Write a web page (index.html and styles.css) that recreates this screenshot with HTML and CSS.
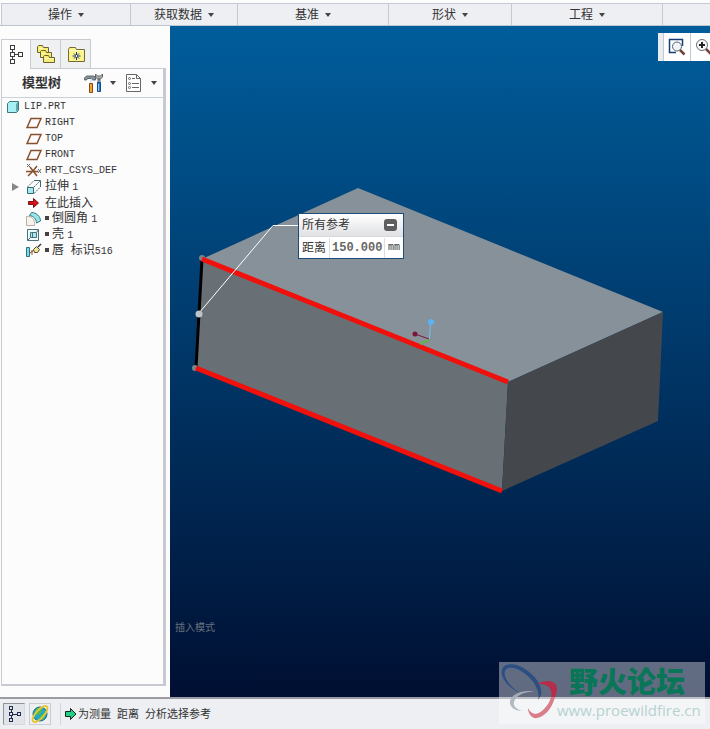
FILE: index.html
```html
<!DOCTYPE html>
<html lang="zh-CN">
<head>
<meta charset="utf-8">
<title>LIP.PRT</title>
<link rel="stylesheet" href="styles.css">
</head>
<body>
<nav class="ribbon" aria-label="功能区">
  <button class="group">操作<i class="caret"></i></button>
  <button class="group">获取数据<i class="caret"></i></button>
  <button class="group">基准<i class="caret"></i></button>
  <button class="group">形状<i class="caret"></i></button>
  <button class="group">工程<i class="caret"></i></button>
  <div class="group"></div>
</nav>
<main class="workspace">
  <aside class="sidebar">
    <div class="tabs">
      <button class="tab active" aria-label="模型树">
        <svg width="18" height="22" viewBox="0 0 18 22" fill="none" stroke="#3c3c3c" shape-rendering="crispEdges"><path d="M3.500 1.500h4v4h-4zM3.500 8.500h4v4h-4zM3.500 15.500h4v4h-4zM11.500 8.500h4v4h-4zM5.500 6v2M5.500 13v2M8 10.500h3"/></svg>
      </button>
      <button class="tab" aria-label="文件夹浏览器">
        <svg width="20" height="20" viewBox="0 0 20 20" stroke="#6f6230"><path fill="#f7ee77" d="M1.500 8.500v-6l1-1h4l1 2h5v5z"/><path fill="#f7ee77" d="M4.500 13.500v-6l1-1h4l1 2h5v5z"/><path fill="#f7ee77" d="M7.500 18.500v-6l1-1h4l1 2h5v5z"/><path stroke="#fffcc0" d="M9 14.500h8M6 9.500h3M3 4.500h4"/></svg>
      </button>
      <button class="tab" aria-label="收藏夹">
        <svg width="20" height="18" viewBox="0 0 20 18"><path fill="#fbf58b" stroke="#756832" d="M2.500 16.500v-12l1-2h6l1 2h8v12z"/><path stroke="#fffcc8" d="M3 5.500h15"/><path stroke="#17306f" d="M10.500 7v8M6.500 11h8M8 8.500l5 5M13 8.500l-5 5"/><path fill="#fff" d="M10 10h1v2h-1z"/></svg>
      </button>
    </div>
    <section class="panel">
      <header class="panel-head">
        <h1>模型树</h1>
        <button class="tool" aria-label="设置">
          <svg width="20" height="22" viewBox="0 0 20 22"><path fill="#879199" stroke="#5c666c" d="M.5 8V6l2-2h7l2 1v3h-3L7 6.500H4L2 8z"/><path stroke="#d9eef5" stroke-width="2" d="M7 7v4"/><path fill="#f4a236" stroke="#8a4a1a" d="M5.500 11.500h3v9h-3z"/><path fill="#a9b0b6" stroke="#666" d="M11.500 2v3l2 2h3l2-2V2l-2 2h-3zM14 7v4h2V7z"/><path fill="#287bd0" stroke="#174987" d="M13.500 10.500h3v9h-3z"/><path stroke="#8dccff" d="M14.500 12v7"/></svg><i class="caret"></i>
        </button>
        <button class="tool" aria-label="显示">
          <svg width="18" height="20" viewBox="0 0 18 20" fill="none" stroke="#666"><path fill="#fff" d="M1.500 1.500h10l4 4v13h-14z"/><path d="M11.500 1.500v4h4M7 5.500h3M7 10.500h7M7 14.500h7"/><circle cx="4.500" cy="5.500" r="1"/><circle cx="4.500" cy="10.500" r="1"/><circle cx="4.500" cy="14.500" r="1"/></svg><i class="caret"></i>
        </button>
      </header>
      <ul class="tree">
        <li class="root"><svg width="14" height="14" viewBox="0 0 14 14"><path fill="#a7f0f3" stroke="#40777e" d="M1.500 3.500l2-2h9v9l-2 2h-9z"/><path fill="#5ba8ae" d="M10 4l2-2v8l-2 2z"/></svg><span class="latin">LIP.PRT</span></li>
        <li><svg width="16" height="12" viewBox="0 0 16 12" fill="none" stroke="#86502a" stroke-width="1.500"><path d="M5 1.500h10l-4 9H1z"/></svg><span class="latin">RIGHT</span></li>
        <li><svg width="16" height="12" viewBox="0 0 16 12" fill="none" stroke="#86502a" stroke-width="1.500"><path d="M5 1.500h10l-4 9H1z"/></svg><span class="latin">TOP</span></li>
        <li><svg width="16" height="12" viewBox="0 0 16 12" fill="none" stroke="#86502a" stroke-width="1.500"><path d="M5 1.500h10l-4 9H1z"/></svg><span class="latin">FRONT</span></li>
        <li><svg width="16" height="16" viewBox="0 0 16 16" fill="none" stroke="#86502a"><path stroke-width="1.500" d="M0 8.500h12M7 8l-5 5M4 4l7 9M11 3L7 8"/><path stroke="#666" d="M1 1l3 3M4 1L1 4M12 6l3 4M15 6l-3 4"/></svg><span class="latin">PRT_CSYS_DEF</span></li>
        <li class="branch"><i class="twist"></i><svg width="16" height="16" viewBox="0 0 16 16" fill="none" stroke="#3f666e"><path fill="#a3edf2" d="M1.500 8.500h6v6h-6z"/><path stroke-dasharray="2 1" d="M1.500 8l6-6M8 14.500l6-6M8 8l6-6"/><path d="M8 1.500h6.500V8"/></svg><span>拉伸 <span class="latin">1</span></span></li>
        <li><svg width="16" height="14" viewBox="0 0 16 14"><path fill="#d8121b" stroke="#77101b" d="M2.500 5.500h5v-3l5 4.500-5 4.500v-3h-5z"/></svg><span>在此插入</span></li>
        <li><svg width="16" height="16" viewBox="0 0 16 16"><path fill="#f7f2ea" stroke="#b8b0a5" d="M.5 5.500c5-1 9 3 8 9h-8z"/><path fill="#98e5e9" stroke="#397d86" d="M3.500 4.500l2-3c5 0 9 4 9 8.500l-4 2c0-4-3-7-7-7.500z"/></svg><i class="mark"></i><span>倒圆角 <span class="latin">1</span></span></li>
        <li><svg width="16" height="14" viewBox="0 0 16 14" fill="none" stroke="#4c7178"><path fill="#eefcfc" d="M1.500 1.500h11v11h-11z"/><path fill="#a3edf2" d="M4.500 4.500h6v5h-6z"/><path d="M1.500 12.500l3-3M10.500 4.500l2-3M6.500 5v4"/></svg><i class="mark"></i><span>壳 <span class="latin">1</span></span></li>
        <li><svg width="16" height="16" viewBox="0 0 16 16"><path fill="#78dce2" stroke="#28727d" d="M.5 4.500h3v9h-3z"/><path fill="#eee99a" stroke="#50492d" d="M7.500 6.500l3-3 3 3-2 3h-3z"/><path fill="none" stroke="#333" stroke-width="1.500" d="M12 4l3-3"/><path fill="none" stroke="#a1443a" d="M4 10l4-3M6 7v5"/></svg><i class="mark"></i><span>唇&nbsp; 标识<span class="latin">516</span></span></li>
      </ul>
    </section>
  </aside>
  <section class="viewport" aria-label="图形窗口">
    <svg class="model" width="540" height="671" viewBox="170 26 540 671">
      <path fill="#879199" d="M202 259L358 188l305 124-155 70z"/>
      <path fill="#687075" d="M202 259l306 123-6 109-306-123z"/>
      <path fill="#44484d" d="M508 382l155-70-5 109-156 70z"/>
      <path stroke="#000" stroke-width="3" d="M202 259l-6 109"/>
      <circle cx="202" cy="258" r="3" fill="#7b8288"/><circle cx="195" cy="368" r="3" fill="#7b8288"/>
      <path stroke="#f0100c" stroke-width="5" d="M202 259l306 123M196 368l306 123"/>
      <path fill="none" stroke="#fff" d="M199 313l74-87.500h26"/>
      <circle cx="199" cy="314" r="3.500" fill="#bcc3ca"/>
      <path stroke="#6fc0f2" d="M430.500 322l-1 17"/><circle cx="431" cy="322" r="3" fill="#58b5f6"/>
      <path stroke="#7b1638" d="M415 334l14 5"/><circle cx="415" cy="334" r="2.500" fill="#7b1638"/>
      <path stroke="#64b24c" stroke-width="2" d="M429 340l-9 4"/>
    </svg>
    <div class="view-tools">
      <button aria-label="重新调整"><svg width="18" height="18" viewBox="0 0 18 18" fill="none"><path stroke="#153c77" stroke-width="1.500" d="M14.500 8V1.500H1.500v13H8"/><circle cx="9" cy="8.500" r="4.500" fill="#eef3f7" stroke="#596169"/><path stroke="#704238" stroke-width="2.500" d="M12 12l4.500 4.500"/></svg></button>
      <button aria-label="放大"><svg width="18" height="18" viewBox="0 0 18 18" fill="none"><circle cx="7" cy="7" r="5.500" fill="#f5f7f9" stroke="#69717a"/><path stroke="#222" stroke-width="2" d="M4 7h6M7 4v6"/><path stroke="#704238" stroke-width="2.500" d="M11 11l5 5"/></svg></button>
    </div>
    <div class="callout">
      <div class="callout-head"><span>所有参考</span><button aria-label="折叠"></button></div>
      <div class="callout-row"><label for="distance">距离</label><input id="distance" value="150.000" readonly><span class="unit">mm</span></div>
    </div>
    <p class="mode">插入模式</p>
  </section>
</main>
<footer class="status">
  <button class="toggle pressed" aria-label="导航器">
    <svg width="16" height="20" viewBox="0 0 16 20" fill="none" stroke="#202d4c" shape-rendering="crispEdges"><path d="M3.500 2.500h3v3h-3zM3.500 8.500h3v3h-3zM3.500 14.500h3v3h-3zM11.500 8.500h3v3h-3zM5.500 6v2M5.500 12v2M7 10.500h4"/></svg>
  </button>
  <button class="toggle" aria-label="浏览器">
    <svg width="18" height="18" viewBox="0 0 18 18"><circle cx="9" cy="9" r="7" fill="#20a9c5" stroke="#176879"/><path fill="#5bb846" d="M5 4l5-2 1 4-3 4-4-1zM10 10l5-2-3 7-3-1z"/><ellipse cx="9" cy="9" rx="10" ry="4" fill="none" stroke="#e4c737" stroke-width="2" transform="rotate(-48 9 9)"/></svg>
  </button>
  <div class="message">
    <svg width="12" height="14" viewBox="0 0 12 14"><path fill="#23cf82" stroke="#15231d" d="M.5 4.500h5v-3L11 7l-5.500 5.500v-3h-5z"/></svg>
    <span>为测量</span><span>距离</span><span>分析选择参考</span>
  </div>
</footer>
<div class="watermark">
  <svg width="58" height="60" viewBox="0 0 58 60">
    <path fill="#264b84" d="M21 31C9 26 1 15 3 8 5 0 17 1 26 7c11 7 18 18 16 26l-3 5c3-8-4-20-14-27C17 5 8 4 6 9c-2 6 5 16 15 22z"/>
    <path fill="#a9b4bd" d="M37 30c-11-3-24 1-26 9-1 6 5 10 12 10-6-2-9-5-8-9 2-7 12-11 22-10z"/>
    <path fill="#bd2746" d="M38 22c9-5 19-4 20 4 0 4-1 7-2 9h-4c2-8-3-14-14-13z"/>
    <path fill="#d8717f" d="M56 35c-3 12-11 20-18 21-5 1-9-4-9-10 4 8 10 7 15 2 4-4 7-8 8-13z"/>
  </svg>
  <div class="brand"><strong>野火论坛</strong><a href="#">www.proewildfire.cn</a></div>
</div>
</body>
</html>
```
FILE: styles.css
```css
* { box-sizing: border-box; }

body {
  margin: 0;
  min-height: 100vh;
  display: flex;
  flex-direction: column;
  position: relative;
  overflow-x: hidden;
  background: #fcfcfd;
  color: #333;
  font: 12px/16px "Liberation Sans", "Noto Sans CJK SC", sans-serif;
}

button {
  margin: 0;
  padding: 0;
  border: 0;
  background: none;
  color: inherit;
  font: inherit;
}

svg { display: block; flex: none; }

.caret {
  width: 0;
  height: 0;
  border: 3px solid transparent;
  border-top: 4px solid #444;
  border-bottom: 0;
}

.ribbon {
  display: grid;
  grid-template-columns: 129fr 107fr 151fr 123fr 151fr 48fr;
  height: 26px;
  padding-left: 1px;
  border-bottom: 1px solid #bcc6d0;
}

.group {
  display: flex;
  align-items: center;
  justify-content: center;
  gap: 6px;
  margin-top: 3px;
  border-top: 1px solid #c3cad2;
  border-left: 1px solid #c3cad2;
  background: #edeff2;
}

.workspace { flex: 1; display: flex; min-height: 0; }

.sidebar {
  width: 170px;
  flex: none;
  display: flex;
  flex-direction: column;
  padding: 13px 4px 11px 1px;
}

.tabs { display: flex; height: 29px; }

.tab {
  width: 30px;
  display: flex;
  align-items: center;
  justify-content: center;
  border: 1px solid #c8ccd2;
  border-left: 0;
  border-bottom: 0;
  background: #eff0f2;
}

.tab.active {
  border-left: 1px solid #c8ccd2;
  background: #fcfcfd;
  height: 30px;
  z-index: 1;
}

.panel {
  flex: 1;
  border: 1px solid #c8ccd2;
  border-right: 3px solid #c8c9d1;
  border-bottom: 2px solid #c8c9d1;
}

.panel-head {
  display: flex;
  align-items: center;
  height: 29px;
  padding-left: 20px;
  border-bottom: 1px solid #c8d0d8;
}

.panel-head h1 {
  flex: none;
  margin: 0 23px 0 0;
  font-size: 13px;
  line-height: 16px;
  white-space: nowrap;
}

.tool { display: flex; flex: none; align-items: center; gap: 6px; margin-right: 9px; }
.tool:last-child { gap: 8px; margin-right: 0; }

.tree { margin: 0; padding: 1px 0 0; list-style: none; }

.tree li {
  display: flex;
  align-items: center;
  gap: 3px;
  height: 16px;
  padding-left: 24px;
  white-space: nowrap;
}

.tree .root { padding-left: 4px; gap: 4px; }
.tree .branch { padding-left: 10px; gap: 3px; }
.tree .twist + svg { margin-left: 4px; }

.latin { font: 10px/16px "Liberation Mono", monospace; }

.twist {
  border: 4px solid transparent;
  border-left: 7px solid #888;
  border-right: 0;
}

.mark { width: 4px; height: 4px; background: #444; margin-bottom: 2px; }

.viewport {
  flex: 1;
  position: relative;
  min-height: 671px;
  overflow: hidden;
  background: linear-gradient(#005d9b, #000f32);
}

.model { position: absolute; top: 0; left: 0; }

.view-tools {
  position: absolute;
  top: 7px;
  right: -14px;
  display: flex;
  height: 28px;
  padding-left: 5px;
  background: #e9edf2;
}

.view-tools button {
  width: 27px;
  padding-left: 4px;
  border-left: 1px solid #c3c9d0;
  background: #fff;
}

.view-tools button + button { width: 34px; }

.callout {
  position: absolute;
  left: 128px;
  top: 187px;
  width: 106px;
  border: 1px solid #1c4b78;
  background: #fff;
}

.callout-head {
  display: flex;
  align-items: center;
  justify-content: space-between;
  height: 22px;
  padding: 0 6px 0 3px;
  background: linear-gradient(#fff, #e0e1e3);
}

.callout-head button {
  width: 13px;
  height: 12px;
  border-radius: 3px;
  background: linear-gradient(#fff, #fff) center / 7px 2px no-repeat #5e5e60;
}

.callout-row { display: flex; align-items: center; height: 22px; border-top: 1px solid #d8d8da; }
.callout-row label { padding: 0 3px; }

.callout-row input {
  flex: 1;
  min-width: 0;
  height: 20px;
  padding: 0 0 0 2px;
  border: 0;
  border-left: 1px solid #ddd;
  border-right: 1px solid #ddd;
  background: none;
  color: #666;
  font: bold 12px/16px "Liberation Mono", monospace;
}

.unit { padding: 0 3px; font: 10px/16px "Liberation Mono", monospace; }

.mode {
  position: absolute;
  left: 5px;
  bottom: 61px;
  margin: 0;
  color: #68717e;
  font-size: 10px;
  line-height: 16px;
}

.status {
  display: flex;
  align-items: center;
  height: 32px;
  padding-left: 3px;
  border-top: 2px solid #9a9ba3;
  background: #edeff2;
}

.toggle {
  display: flex;
  align-items: center;
  justify-content: center;
  width: 22px;
  height: 22px;
  margin-right: 4px;
  border: 1px solid #c9cdd2;
}

.toggle.pressed { border-color: #8f949b #d5d8dc #d5d8dc #8f949b; background: #e1e5ea; }

.message {
  display: flex;
  align-items: center;
  gap: 6px;
  height: 22px;
  margin-left: 5px;
  padding-left: 4px;
  border-left: 1px solid #d2d5d9;
  font-size: 11px;
}

.message svg { margin-right: -5px; }

.watermark {
  position: absolute;
  right: 5px;
  bottom: 5px;
  display: flex;
  width: 206px;
  height: 62px;
  background: rgba(255, 255, 255, 0.38);
}

.watermark svg { opacity: 0.9; }

.brand { display: flex; flex-direction: column; }

.brand strong {
  margin-left: 12px;
  color: #087657;
  font: 900 29px/36px "Noto Sans CJK SC", sans-serif;
}

.brand a {
  color: #b5d3d0;
  font: 15px/24px "Open Sans", sans-serif;
  text-decoration: none;
}
```
